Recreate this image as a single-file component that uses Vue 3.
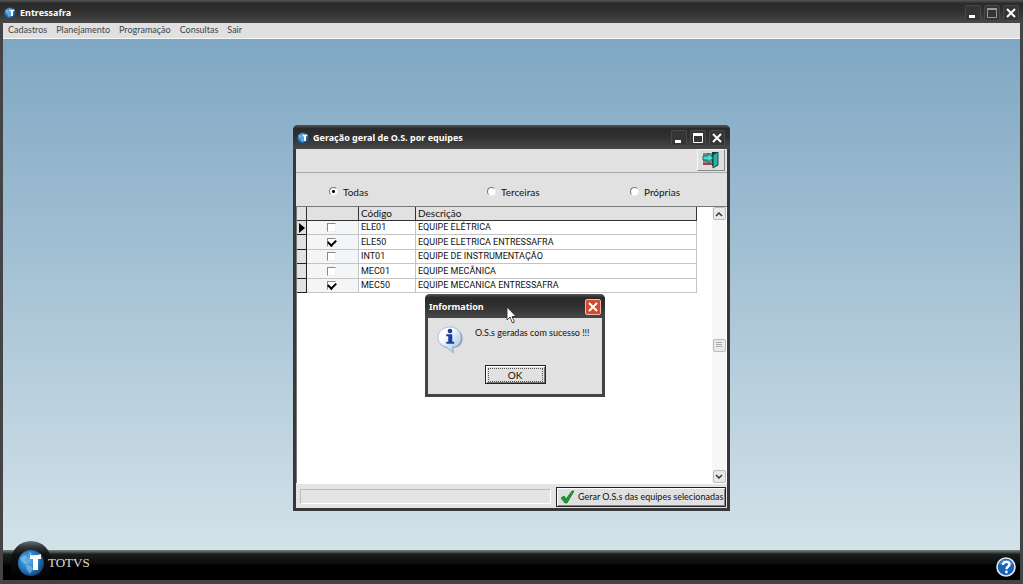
<script setup>
import { ref } from 'vue'

const menus = ['Cadastros', 'Planejamento', 'Programação', 'Consultas', 'Sair']
const filters = ['Todas', 'Terceiras', 'Próprias']
const filter = ref('Todas')
const teams = ref([
  { code: 'ELE01', name: 'EQUIPE ELÉTRICA', selected: false },
  { code: 'ELE50', name: 'EQUIPE ELETRICA ENTRESSAFRA', selected: true },
  { code: 'INT01', name: 'EQUIPE DE INSTRUMENTAÇÃO', selected: false },
  { code: 'MEC01', name: 'EQUIPE MECÂNICA', selected: false },
  { code: 'MEC50', name: 'EQUIPE MECANICA ENTRESSAFRA', selected: true }
])
</script>

<template>
  <div class="app">
    <svg class="defs" aria-hidden="true">
      <defs>
        <radialGradient id="globe" cx="40%" cy="40%" r="65%">
          <stop offset="0" stop-color="#5fb2ea" />
          <stop offset="0.6" stop-color="#2877bb" />
          <stop offset="1" stop-color="#123f74" />
        </radialGradient>
        <linearGradient id="bubble" x1="0" y1="0" x2="1" y2="1">
          <stop offset="0.3" stop-color="#ffffff" />
          <stop offset="1" stop-color="#8fc0ea" />
        </linearGradient>
        <symbol id="logo" viewBox="0 0 28 28">
          <circle cx="14" cy="14" r="13" fill="url(#globe)" />
          <path d="M3 9l4-3 3 2-2 3 3 3-3 1-3-2zM9 16l5 1 2 3-3 5-3-4zM12 3l3 1-2 3z" fill="#8fd0f5" opacity=".55" />
          <path d="M13 6q6 1 11-1v5h-3v11h-5V10h-3z" fill="#fff" />
        </symbol>
      </defs>
    </svg>

    <header class="titlebar main-title">
      <svg class="title-icon"><use href="#logo" /></svg>
      <h1>Entressafra</h1>
      <div class="controls">
        <button type="button" aria-label="Minimizar"><svg viewBox="0 0 14 14"><path d="M3 9h6v3H3z" fill="#fff" /></svg></button>
        <button type="button" aria-label="Maximizar" disabled><svg viewBox="0 0 14 14"><path d="M2.500 3v8.500h9V3z" fill="none" stroke="#999" /><path d="M2 2h10v2H2z" fill="#999" /></svg></button>
        <button type="button" aria-label="Fechar"><svg viewBox="0 0 14 14"><path d="M3 3l8 8M11 3l-8 8" stroke="#fff" stroke-width="2" /></svg></button>
      </div>
    </header>

    <nav class="menu">
      <a v-for="item in menus" :key="item" href="#">{{ item }}</a>
    </nav>

    <main class="desktop">
      <section class="window">
        <header class="titlebar">
          <svg class="title-icon"><use href="#logo" /></svg>
          <h2>Geração geral de O.S. por equipes</h2>
          <div class="controls">
            <button type="button" aria-label="Minimizar"><svg viewBox="0 0 14 14"><path d="M3 9h6v3H3z" fill="#fff" /></svg></button>
            <button type="button" aria-label="Maximizar"><svg viewBox="0 0 14 14"><path d="M2.500 3v8.500h9V3z" fill="none" stroke="#fff" /><path d="M2 2h10v3H2z" fill="#fff" /></svg></button>
            <button type="button" aria-label="Fechar"><svg viewBox="0 0 14 14"><path d="M3 3l8 8M11 3l-8 8" stroke="#fff" stroke-width="2" /></svg></button>
          </div>
        </header>

        <div class="toolbar">
          <button type="button" class="exit" aria-label="Sair">
            <svg viewBox="0 0 18 18">
              <path d="M1 2h10v12H1z" fill="#858585" />
              <path d="M1 12h11v2H1z" fill="#b43c3c" />
              <path d="M10 1h6v14h-6z" fill="#123c3c" />
              <path d="M11 4l5-3v13l-5 3z" fill="#2fae9c" stroke="#10504c" />
              <path d="M1 5h5V2l5 5-5 5V9H1z" fill="#49dcd0" stroke="#15716b" />
            </svg>
          </button>
        </div>

        <div class="filters">
          <label v-for="item in filters" :key="item">
            <input v-model="filter" type="radio" name="filter" :value="item" />
            <span>{{ item }}</span>
          </label>
        </div>

        <div class="grid">
          <div class="grid-body">
            <table>
              <colgroup>
                <col class="c-mark" /><col class="c-check" /><col class="c-code" /><col />
              </colgroup>
              <thead>
                <tr><th></th><th></th><th>Código</th><th>Descrição</th></tr>
              </thead>
              <tbody>
                <tr v-for="(team, i) in teams" :key="team.code">
                  <td class="mark"><svg v-if="i === 0" viewBox="0 0 6 10"><path d="M0 0l6 5-6 5z" /></svg></td>
                  <td class="check"><input v-model="team.selected" type="checkbox" :aria-label="team.name" /></td>
                  <td>{{ team.code }}</td>
                  <td>{{ team.name }}</td>
                </tr>
              </tbody>
            </table>
          </div>
          <div class="scrollbar">
            <button type="button" aria-label="Rolar para cima"><svg viewBox="0 0 8 6"><path d="M1 5l3-3 3 3" /></svg></button>
            <div class="thumb"><i></i></div>
            <button type="button" aria-label="Rolar para baixo"><svg viewBox="0 0 8 6"><path d="M1 1l3 3 3-3" /></svg></button>
          </div>
        </div>

        <footer class="actions">
          <div class="progress"></div>
          <button type="button" class="generate">
            <svg viewBox="0 0 14 14"><path d="M1 8l3-2 2 3 6-8 2 0-7 12H5z" fill="#16a02c" stroke="#0a6a1a" stroke-width=".7" /></svg>
            <span>Gerar O.S.s das equipes selecionadas</span>
          </button>
        </footer>
      </section>

      <section class="dialog" role="alertdialog" aria-labelledby="dialog-title">
        <header class="titlebar">
          <h2 id="dialog-title">Information</h2>
          <button type="button" class="close" aria-label="Fechar"><svg viewBox="0 0 14 14"><path d="M3 3l8 8M11 3l-8 8" stroke="#fff" stroke-width="2" /></svg></button>
        </header>
        <div class="dialog-body">
          <svg class="info" viewBox="0 0 26 28">
            <path d="M14 2C7 2 2 6.500 2 12.500c0 5 3 8.500 8 9.500l6.500 5.500V22c6-.6 9-4.500 9-9.500C25.500 6.500 21 2 14 2z" fill="#5f7590" opacity=".7" />
            <path d="M13 1C6 1 1 5.500 1 11.500c0 5 3.500 8.500 8.500 9.500l6 5.500V21c6-.6 8.500-4.500 8.500-9.500C24 5.500 19.500 1 13 1z" fill="url(#bubble)" stroke="#a5bdd6" />
            <circle cx="13" cy="5" r="2.300" fill="#1a3fa0" />
            <path d="M9.500 8.500h5.500V16h2v1.500H9.500V16h2v-6h-2z" fill="#1a3fa0" stroke="#1a3fa0" stroke-width=".5" />
          </svg>
          <p>O.S.s geradas com sucesso !!!</p>
        </div>
        <button type="button" class="ok"><span>OK</span></button>
      </section>

      <svg class="cursor" viewBox="0 0 11 18"><path d="M1 1v13l3-3 2.500 6 2-1-2.500-5.500h4z" fill="#fff" stroke="#222" stroke-width=".8" /></svg>
    </main>

    <footer class="taskbar">
      <div class="halo"></div>
      <div class="brand">
        <svg><use href="#logo" /></svg>
        <span>TOTVS</span>
      </div>
      <button type="button" class="help" aria-label="Ajuda">
        <svg viewBox="0 0 20 20">
          <circle cx="10" cy="10" r="9" fill="#1b62b4" stroke="#dfe8f2" stroke-width="1.600" />
          <path d="M3 8a7.300 7.300 0 0 1 14 0c-4-2-10-2-14 0z" fill="#6ba6df" opacity=".6" />
          <path d="M7 8c0-4 6.500-4 6.500-.8 0 2.300-3 2.300-3 5" fill="none" stroke="#fff" stroke-width="2.400" />
          <circle cx="10.400" cy="15" r="1.400" fill="#fff" />
        </svg>
      </button>
    </footer>
  </div>
</template>

<style>
body {
  margin: 0;
}
</style>

<style scoped>
* {
  box-sizing: border-box;
}
.app {
  position: relative;
  display: flex;
  flex-direction: column;
  min-height: 100vh;
  padding: 0 3px 4px;
  background: #444446;
  font: 10px/12px Lato, Roboto, sans-serif;
  color: #111;
}
.defs {
  position: absolute;
  width: 0;
  height: 0;
}
button {
  padding: 0;
  border: 0;
  font: inherit;
  color: inherit;
}
svg {
  display: block;
  flex: none;
}
h1,
h2,
p {
  margin: 0;
}
.titlebar {
  display: flex;
  align-items: center;
  gap: 4px;
  height: 24px;
  padding: 2px 3px 0;
  background: linear-gradient(#555 0, #2a2a2a 15%, #303030 50%, #484848 100%);
  color: #fff;
}
.titlebar h1,
.titlebar h2 {
  flex: 1;
  font: bold 9px/12px "Noto Sans", "Open Sans", sans-serif;
}
.main-title {
  height: 23px;
  margin: 0 -3px;
}
.title-icon {
  width: 12px;
  height: 12px;
}
.main-title .title-icon {
  margin-left: 1px;
}
.main-title .controls {
  margin-right: 1px;
}
.controls {
  display: flex;
  gap: 3px;
}
.controls button {
  width: 16px;
  height: 16px;
  border: 1px solid #484848;
  border-radius: 2px;
  background: #353535;
}
.controls svg {
  width: 14px;
  height: 14px;
}
.menu {
  display: flex;
  gap: 9px;
  height: 16px;
  padding: 0 5px;
  background: #e0e0e0;
  border-bottom: 1px solid #f4f8fa;
  font: 9px/14px Lato, Roboto, sans-serif;
}
.menu a {
  color: #444;
  text-decoration: none;
}
.desktop {
  flex: 1;
  background: linear-gradient(#7fa7c3, #d3e2e9);
}
.window {
  position: absolute;
  top: 125px;
  left: 293px;
  display: flex;
  flex-direction: column;
  width: 437px;
  height: 386px;
  padding: 0 3px 3px;
  border-radius: 5px 5px 0 0;
  background: #36383b;
}
.window .titlebar,
.dialog .titlebar {
  flex: none;
  margin: 0 -3px;
  padding: 2px 4px 0;
  border-radius: 5px 5px 0 0;
}
.window .titlebar {
  padding-right: 5px;
}
.toolbar {
  display: flex;
  justify-content: flex-end;
  height: 24px;
  background: #e1e1e1;
  border-bottom: 1px solid #aaa;
}
.exit {
  display: grid;
  place-items: center;
  width: 28px;
  height: 22px;
  margin-right: 2px;
  background: #dedede;
  border: 1px solid #f8f8f8;
  border-right-color: #888;
  border-bottom-color: #888;
}
.exit svg {
  width: 18px;
  height: 18px;
}
.filters {
  display: grid;
  grid-template-columns: 158px 143px 1fr;
  align-items: center;
  height: 33px;
  padding: 4px 0 0 33px;
  background: #e1e1e1;
}
.filters label {
  display: flex;
  align-items: center;
  gap: 5px;
}
.filters input {
  appearance: none;
  width: 9px;
  height: 9px;
  margin: 0;
  border: 1px solid #777;
  border-right-color: #eee;
  border-bottom-color: #eee;
  border-radius: 50%;
  background: #fff;
}
.filters input:checked {
  background: radial-gradient(circle, #000 0 1px, #fff 2px);
}
.grid {
  display: flex;
  flex: 1;
  min-height: 0;
  border: 1px solid #777;
  border-width: 1px 0 0 1px;
  background: #fff;
}
.grid-body {
  flex: 1;
  padding-right: 15px;
}
table {
  width: 100%;
  table-layout: fixed;
  border-collapse: separate;
  border-spacing: 0;
}
.c-mark {
  width: 10px;
}
.c-check {
  width: 52px;
}
.c-code {
  width: 57px;
}
th,
td {
  height: 14px;
  padding: 0 0 0 2px;
  overflow: hidden;
  border-right: 1px solid #c4c4c4;
  border-bottom: 1px solid #c4c4c4;
  font-weight: 400;
  line-height: 13px;
  text-align: left;
  white-space: nowrap;
}
td {
  font-family: Roboto, sans-serif;
  font-size: 9px;
}
tbody tr:nth-child(even) td {
  height: 15px;
}
th {
  background: #e1e1e1;
  border-right-color: #333;
  border-bottom-color: #333;
}
.mark {
  background: #e1e1e1;
  border-right-color: #222;
  border-bottom-color: #222;
}
.mark svg {
  width: 6px;
  height: 10px;
}
.check {
  padding-left: 20px;
  background: #f4f5f7;
}
.check input {
  display: block;
  appearance: none;
  width: 9px;
  height: 9px;
  margin: 0;
  border: 1px solid #888;
  border-right-color: #eee;
  border-bottom-color: #eee;
  background: #fff;
}
.check input:checked::before {
  content: "";
  display: block;
  width: 6px;
  height: 4px;
  border: solid #000;
  border-width: 0 0 2px 2px;
  transform: rotate(-45deg);
}
.scrollbar {
  display: flex;
  flex-direction: column;
  justify-content: space-between;
  align-items: center;
  width: 14px;
  margin-right: 1px;
  background: #f6f6f6;
}
.scrollbar button,
.thumb {
  display: grid;
  place-items: center;
  width: 13px;
  height: 13px;
  border: 1px solid #bbb;
  border-radius: 2px;
  background: #e8e8e8;
}
.scrollbar svg {
  width: 8px;
  height: 6px;
  fill: none;
  stroke: #333;
  stroke-width: 1.5;
}
.thumb i {
  width: 6px;
  height: 6px;
  background: repeating-linear-gradient(#aaa 0 1px, #eee 1px 2px);
}
.actions {
  display: flex;
  gap: 5px;
  height: 25px;
  padding: 3px 1px 1px 4px;
  background: #e4e4e4;
  border-top: 1px solid #fff;
}
.progress {
  flex: 1;
  margin: 2px 0 3px;
  border: 1px solid #bbb;
  border-right-color: #fff;
  border-bottom-color: #fff;
}
.generate {
  display: flex;
  align-items: center;
  gap: 4px;
  width: 170px;
  padding-left: 3px;
  border: 1px solid #222;
  background: #e0e0e0;
  box-shadow: inset 1px 1px #fff, inset -1px -1px #888;
  font-size: 9px;
  white-space: nowrap;
}
.generate svg {
  width: 14px;
  height: 14px;
}
.dialog {
  position: absolute;
  top: 294px;
  left: 425px;
  width: 180px;
  height: 103px;
  padding: 0 3px 3px;
  border-radius: 5px 5px 0 0;
  background: linear-gradient(#e1e1e1, #e1e1e1) content-box, #444;
}
.dialog .close {
  width: 16px;
  height: 16px;
  border: 1px solid #f3b8aa;
  border-radius: 2px;
  background: #d5492f;
}
.close svg {
  width: 14px;
  height: 14px;
}
.dialog-body {
  display: flex;
  gap: 12px;
  height: 47px;
  padding: 8px 0 0 9px;
}
.dialog-body p {
  padding-top: 1px;
  font-size: 9px;
  white-space: nowrap;
}
.info {
  width: 26px;
  height: 28px;
}
.ok {
  display: block;
  width: 61px;
  height: 19px;
  margin: 0 auto;
  padding: 1px;
  border: 1px solid #222;
  background: #e1e1e1;
  box-shadow: inset 1px 1px #fff, inset -1px -1px #777;
}
.ok span {
  display: block;
  margin: 0 1px;
  border: 1px dotted #555;
  line-height: 12px;
}
.cursor {
  position: absolute;
  top: 306px;
  left: 506px;
  width: 11px;
  height: 18px;
}
.taskbar {
  position: relative;
  display: flex;
  justify-content: space-between;
  align-items: center;
  height: 30px;
  padding: 0 4px 4px 14px;
  background: linear-gradient(#73827f 0, #39413f 3px, #1c1f1e 4px, #0a0a0a 14px, #000 15px);
}
.halo {
  position: absolute;
  top: -9px;
  left: 8px;
  width: 40px;
  height: 39px;
  border-radius: 20px 20px 0 0;
  background: linear-gradient(#6a7173, #33383a 15%, #111 35%, #000);
}
.brand {
  position: relative;
  display: flex;
  align-items: center;
  gap: 3px;
  color: #ddd;
  font: 13px/16px "Liberation Serif", serif;
}
.brand svg {
  width: 28px;
  height: 28px;
}
.help {
  margin-top: 8px;
  background: none;
}
.help svg {
  width: 20px;
  height: 20px;
}
</style>
